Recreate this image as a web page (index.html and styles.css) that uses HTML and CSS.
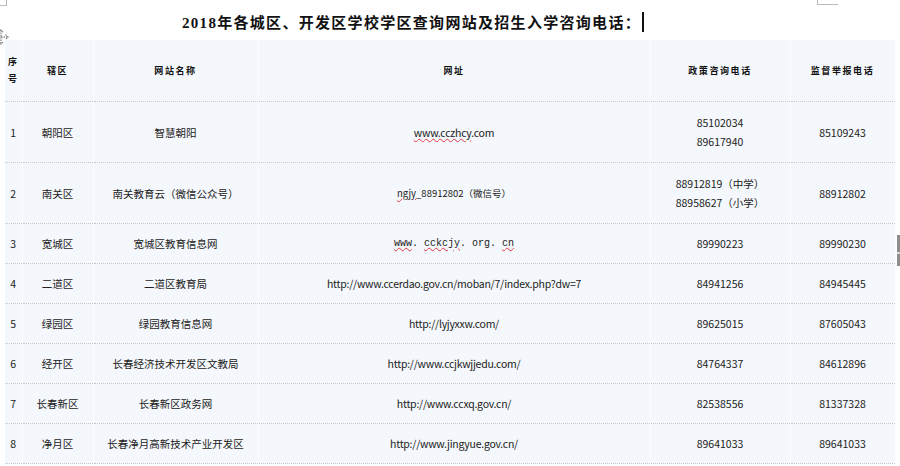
FILE: index.html
```html
<!DOCTYPE html>
<html lang="zh-CN">
<head>
  <meta charset="UTF-8" />
  <title>2018年各城区、开发区学校学区查询网站及招生入学咨询电话</title>
  <link rel="stylesheet" href="styles.css">
</head>
<body>
  <div class="corner corner-left"></div>
  <div class="corner corner-right"></div>
  <div class="edge-bar"></div>

  <h1 class="title">2018年各城区、开发区学校学区查询网站及招生入学咨询电话：<span class="caret"></span></h1>

  <div class="sheet">
    <svg class="move-handle" width="18" height="18" viewBox="0 0 18 18">
      <g fill="none" stroke="#8a8a8a" stroke-width="1.4" stroke-dasharray="1.4 1">
        <path d="M9 2 V16 M2 9 H16" />
        <path d="M6.5 4.5 L9 2 L11.5 4.5 M6.5 13.5 L9 16 L11.5 13.5 M4.5 6.5 L2 9 L4.5 11.5 M13.5 6.5 L16 9 L13.5 11.5" />
      </g>
    </svg>

    <table class="schools">
      <colgroup>
        <col class="c-no"><col class="c-dist"><col class="c-name"><col class="c-url"><col class="c-tel"><col class="c-report">
      </colgroup>
      <thead>
        <tr>
          <th>序<br>号</th>
          <th>辖区</th>
          <th>网站名称</th>
          <th>网址</th>
          <th>政策咨询电话</th>
          <th>监督举报电话</th>
        </tr>
      </thead>
      <tbody>
        <tr class="tall">
          <td>1</td>
          <td>朝阳区</td>
          <td>智慧朝阳</td>
          <td class="url"><span class="spell">www.cczhcy</span>.com</td>
          <td>85102034<br>89617940</td>
          <td>85109243</td>
        </tr>
        <tr class="tall">
          <td>2</td>
          <td>南关区</td>
          <td>南关教育云（微信公众号）</td>
          <td class="small"><span class="spell">ngjy</span>_88912802（微信号）</td>
          <td>88912819（中学）<br>88958627（小学）</td>
          <td>88912802</td>
        </tr>
        <tr>
          <td>3</td>
          <td>宽城区</td>
          <td>宽城区教育信息网</td>
          <td class="mono"><span class="spell">www</span>. <span class="spell">cckcjy</span>. org. <span class="spell">cn</span></td>
          <td>89990223</td>
          <td>89990230</td>
        </tr>
        <tr>
          <td>4</td>
          <td>二道区</td>
          <td>二道区教育局</td>
          <td class="url">http://www.ccerdao.gov.cn/moban/7/index.php?dw=7</td>
          <td>84941256</td>
          <td>84945445</td>
        </tr>
        <tr>
          <td>5</td>
          <td>绿园区</td>
          <td>绿园教育信息网</td>
          <td class="url">http://lyjyxxw.com/</td>
          <td>89625015</td>
          <td>87605043</td>
        </tr>
        <tr>
          <td>6</td>
          <td>经开区</td>
          <td>长春经济技术开发区文教局</td>
          <td class="url">http://www.ccjkwjjedu.com/</td>
          <td>84764337</td>
          <td>84612896</td>
        </tr>
        <tr>
          <td>7</td>
          <td>长春新区</td>
          <td>长春新区政务网</td>
          <td class="url">http://www.ccxq.gov.cn/</td>
          <td>82538556</td>
          <td>81337328</td>
        </tr>
        <tr>
          <td>8</td>
          <td>净月区</td>
          <td>长春净月高新技术产业开发区</td>
          <td class="url">http://www.jingyue.gov.cn/</td>
          <td>89641033</td>
          <td>89641033</td>
        </tr>
      </tbody>
    </table>
  </div>
</body>
</html>
```

FILE: styles.css
```css
body {
  margin: 0;
  background: #fff;
  color: #222;
  font-family: "Noto Sans CJK SC", sans-serif;
  position: relative;
  overflow: hidden;
  height: 466px;
}
.corner {
  position: absolute;
  top: 0;
  border-color: #b9b9b9;
  border-style: solid;
}
.corner-left {
  left: 0;
  width: 6px;
  height: 5px;
  border-width: 0 1px 1px 0;
}
.corner-right {
  left: 817px;
  width: 20px;
  height: 4px;
  border-width: 0 0 1px 1px;
}
.edge-bar {
  position: absolute;
  right: 0;
  top: 235px;
  width: 3px;
  height: 31px;
  background: linear-gradient(#8e8e8e 0 17px, #d8d8d8 17px 19px, #8e8e8e 19px);
}
.title {
  margin: 0;
  height: 40px;
  padding-left: 182px;
  font-family: "Liberation Serif", "Noto Sans CJK SC", serif;
  font-size: 15px;
  font-weight: 700;
  letter-spacing: 1.3px;
  line-height: 47px;
  color: #111;
  white-space: nowrap;
}
.caret {
  display: inline-block;
  width: 2px;
  height: 20px;
  background: #111;
  vertical-align: -4px;
  margin-left: 1px;
}
.sheet {
  position: relative;
  padding: 0 5px;
}
.move-handle {
  position: absolute;
  left: -8px;
  top: -12px;
}
.schools {
  width: 890px;
  table-layout: fixed;
  border-collapse: collapse;
  background: #f4f7fb;
  font-size: 10.5px;
  text-align: center;
}
.c-no { width: 17px; }
.c-dist { width: 71px; }
.c-name { width: 165px; }
.c-url { width: 392px; }
.c-tel { width: 140px; }
.c-report { width: 105px; }
.schools th,
.schools td {
  padding: 0;
  border-right: 1px solid #fbfcfe;
  border-bottom: 1px dotted #c4c8ce;
  line-height: 19px;
  white-space: nowrap;
}
.schools th {
  height: 60px;
  font-family: "Liberation Serif", "Noto Sans CJK SC", serif;
  font-size: 9px;
  font-weight: 700;
  letter-spacing: 1.6px;
  color: #111;
  padding-top: 1px;
}
.schools th:first-child {
  line-height: 17px;
}
.schools td {
  height: 39px;
}
.schools tr.tall td {
  height: 60px;
}
.schools .url {
  letter-spacing: -0.25px;
}
.schools .small {
  font-size: 9.5px;
}
.schools .mono {
  font-family: "Liberation Mono", monospace;
  font-size: 10px;
}
.spell {
  text-decoration: underline wavy #e0393e;
  text-decoration-thickness: 1px;
  text-underline-offset: 1px;
}
```
